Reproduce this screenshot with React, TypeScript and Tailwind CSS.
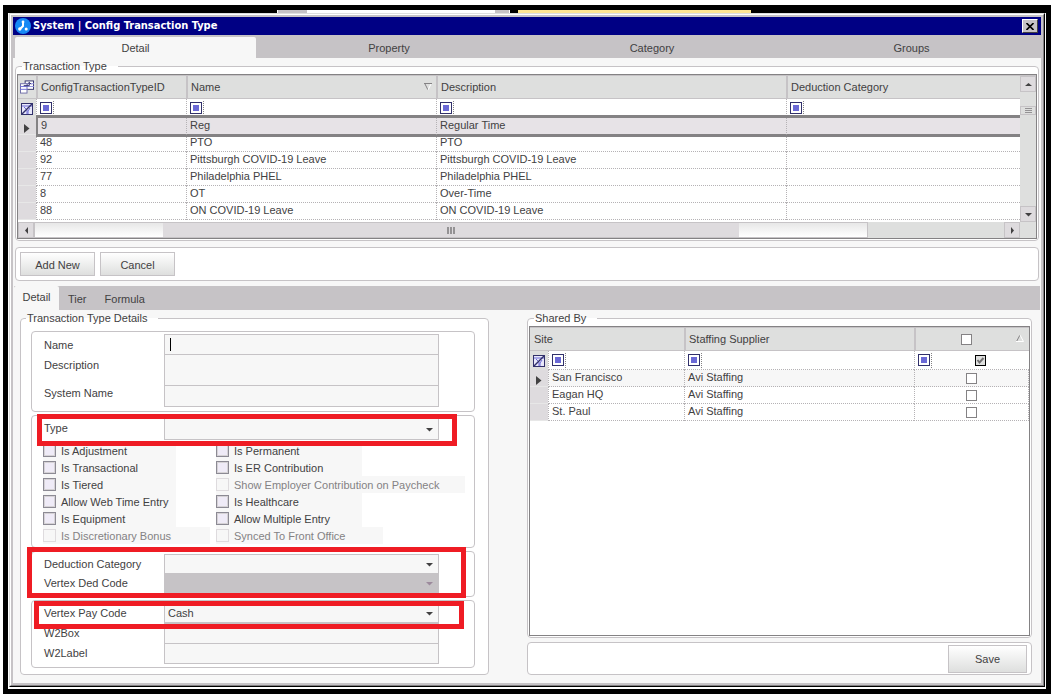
import { useState } from "react";
import type { ReactNode } from "react";

interface ITransactionType {
  id: number;
  name: string;
  description: string;
}

interface ISite {
  site: string;
  supplier: string;
}

interface IFlag {
  label: string;
  disabled?: boolean;
  width: string;
}

const transactionTypes: ITransactionType[] = [
  { id: 9, name: "Reg", description: "Regular Time" },
  { id: 48, name: "PTO", description: "PTO" },
  { id: 92, name: "Pittsburgh COVID-19 Leave", description: "Pittsburgh COVID-19 Leave" },
  { id: 77, name: "Philadelphia PHEL", description: "Philadelphia PHEL" },
  { id: 8, name: "OT", description: "Over-Time" },
  { id: 88, name: "ON COVID-19 Leave", description: "ON COVID-19 Leave" },
];

const sites: ISite[] = [
  { site: "San Francisco", supplier: "Avi Staffing" },
  { site: "Eagan HQ", supplier: "Avi Staffing" },
  { site: "St. Paul", supplier: "Avi Staffing" },
];

const leftFlags: IFlag[] = [
  { label: "Is Adjustment", width: "w-[133px]" },
  { label: "Is Transactional", width: "w-[133px]" },
  { label: "Is Tiered", width: "w-[133px]" },
  { label: "Allow Web Time Entry", width: "w-[133px]" },
  { label: "Is Equipment", width: "w-[133px]" },
  { label: "Is Discretionary Bonus", disabled: true, width: "w-[167px]" },
];

const rightFlags: IFlag[] = [
  { label: "Is Permanent", width: "w-[146px]" },
  { label: "Is ER Contribution", width: "w-[146px]" },
  { label: "Show Employer Contribution on Paycheck", disabled: true, width: "w-[249px]" },
  { label: "Is Healthcare", width: "w-[146px]" },
  { label: "Allow Multiple Entry", width: "w-[146px]" },
  { label: "Synced To Front Office", disabled: true, width: "w-[167px]" },
];

const field = "block w-full border border-[#c6c3c6] bg-[#f7f7f7] px-1 outline-none";

const Logo = () => (
  <svg width="16" height="16" viewBox="0 0 16 16" aria-hidden="true">
    <circle cx="8" cy="8" r="8" fill="#1689f5" />
    <path d="M8 4v4L5 11" stroke="#fff" strokeWidth="2" fill="none" />
    <circle cx="8" cy="4" r="1.4" fill="#fff" />
    <circle cx="4.8" cy="11" r="1.7" fill="#fff" />
    <circle cx="11.2" cy="11" r="1.5" fill="#fff" />
  </svg>
);

const Arrow = ({ dir, color = "#424142" }: { dir: "up" | "down" | "left" | "right"; color?: string }) => {
  const paths = {
    up: "M0 5h7L3.5 2z",
    down: "M0 2h7L3.5 5.500z",
    left: "M5 0v7L2 3.5z",
    right: "M2 0v7L5 3.5z",
  };
  return (
    <svg width="7" height="7" viewBox="0 0 7 7" aria-hidden="true">
      <path d={paths[dir]} fill={color} />
    </svg>
  );
};

const RowPointer = () => (
  <svg className="mx-auto mt-1" width="6" height="9" viewBox="0 0 6 9" aria-hidden="true">
    <path d="M0 0v9l5.5-4.5z" fill="#424142" />
  </svg>
);

const ClearFilterIcon = () => (
  <svg className="mx-auto" width="12" height="12" viewBox="0 0 12 12" aria-hidden="true">
    <rect x=".5" y=".5" width="11" height="11" fill="#e8e8fa" stroke="#31306b" />
    <path d="M1 3h10M3 4l3 3v4M9 5L7 8v3" stroke="#6b69d6" fill="none" />
    <path d="M1 11L11 1" stroke="#31306b" strokeWidth="1.5" />
  </svg>
);

const ColumnsIcon = () => (
  <svg className="mx-auto" width="14" height="14" viewBox="0 0 15 14" aria-hidden="true">
    <rect x="5.5" y=".5" width="9" height="9" fill="#fff" stroke="#31306b" />
    <path d="M5 3.5h10M5 6.5h10" stroke="#8c8ade" />
    <rect x=".5" y="3.5" width="7" height="10" fill="#fff" stroke="#6b69a6" />
    <path d="M0 6.5h8M0 9.5h8" stroke="#6b69d6" />
    <path d="M4 5.5h6V2M8 4l2-2 2 2" stroke="#31306b" fill="none" />
  </svg>
);

const FilterBox = () => (
  <div className="flex h-[15px] w-[17px] items-center border-r border-dotted border-[#848284] pl-[3px]">
    <button type="button" aria-label="Filter" className="grid size-3 place-items-center border border-[#31306b] bg-white">
      <span className="size-[6px] bg-[#6b69d6]" />
    </button>
  </div>
);

const Caption = ({ children }: { children: ReactNode }) => (
  <legend className="ml-[5px] h-[14px] pr-[11px] pl-px leading-[14px]">{children}</legend>
);

const ScrollButton = ({ dir }: { dir: "up" | "down" | "left" | "right" }) => (
  <button
    type="button"
    aria-label={`Scroll ${dir}`}
    className="grid size-4 shrink-0 place-items-center border border-[#c6c3c6] bg-[#dedbde]"
  >
    <Arrow dir={dir} />
  </button>
);

interface IFormRowProps {
  id: string;
  label: string;
  leading?: string;
  children: ReactNode;
}

// The negative margin keeps a tall label from stretching its row
const FormRow = ({ id, label, leading = "leading-5", children }: IFormRowProps) => (
  <div className="grid grid-cols-[132px_275px]">
    <label htmlFor={id} className={`${leading} -mb-2 pl-3`}>{label}</label>
    <div className="relative">{children}</div>
  </div>
);

const Combo = ({ id, options, className, disabled }: { id: string; options: string[]; className: string; disabled?: boolean }) => (
  <>
    <select
      id={id}
      disabled={disabled}
      className={`${className} block w-full appearance-none border border-[#c6c3c6] px-[3px] outline-none ${
        disabled ? "bg-[#c6c3c6]" : "bg-[#f7f7f7]"
      }`}
    >
      {options.map((option) => (
        <option key={option}>{option}</option>
      ))}
    </select>
    <span className="pointer-events-none absolute inset-y-0 right-[6px] flex items-center">
      <Arrow dir="down" color={disabled ? "#9c8a9c" : "#424142"} />
    </span>
  </>
);

const Flags = ({ flags }: { flags: IFlag[] }) => (
  <div className="flex flex-col">
    {flags.map((flag) => (
      <label
        key={flag.label}
        className={`${flag.width} flex h-[17px] items-center gap-[5px] bg-[#f7f7f7] whitespace-nowrap ${
          flag.disabled ? "text-[#848284]" : ""
        }`}
      >
        <input
          type="checkbox"
          disabled={flag.disabled}
          className="size-[13px] shrink-0 appearance-none border border-[#8c8a94] bg-[#efebf7] shadow-[inset_0_0_0_1px_#d6d3d6] checked:bg-[#6b69d6] disabled:border-[#dedbde] disabled:bg-[#f7f7f7] disabled:shadow-none"
        />
        {flag.label}
      </label>
    ))}
  </div>
);

const headCell = "h-[23px] border-b border-l-2 border-[#c6c3c6] bg-[#dedfde] pl-[3px] text-left font-normal";
const filterCell = "h-[19px] border-b border-l border-dotted border-[#b5b2b5]";
const bodyCell = "h-[17px] border-b border-l border-[#b5b2b5] px-[3px] align-top leading-[14px]";
const smallCheck = "block size-[11px] appearance-none border border-[#848284] bg-white checked:bg-[#848284]";
const panel = "rounded-[4px] border border-[#c6c3c6] bg-white";
const pushButton = "border border-[#c6c3c6] bg-linear-to-b from-white to-[#dedfde] pt-px";

const TransactionGrid = () => {
  const [selected, setSelected] = useState<number>(9);

  return (
    <div className="border border-[#848284] bg-white">
      <div className="flex border-t border-[#c6c3c6]">
        <div className="h-[146px] min-w-0 flex-1 overflow-hidden">
          <table className="w-full table-fixed border-separate border-spacing-0">
            <colgroup>
              <col className="w-[18px]" />
              <col className="w-[150px]" />
              <col className="w-[250px]" />
              <col className="w-[350px]" />
              <col />
            </colgroup>
            <thead>
              <tr>
                <th className="h-[23px] border-b border-[#c6c3c6] bg-[#dedfde]"><ColumnsIcon /></th>
                <th className={headCell}>ConfigTransactionTypeID</th>
                <th className={headCell}>
                  <div className="flex items-center justify-between pr-1">
                    Name
                    <svg width="8" height="8" viewBox="0 0 8 8" aria-hidden="true">
                      <path d="M0 .5h8M1 1l3 6" stroke="#848284" fill="none" />
                      <path d="M7 1L4 7" stroke="#fff" />
                    </svg>
                  </div>
                </th>
                <th className={headCell}>Description</th>
                <th className={headCell}>Deduction Category</th>
              </tr>
            </thead>
            <tbody>
              <tr>
                <td className="h-[19px] bg-[#dedfde]"><ClearFilterIcon /></td>
                {[0, 1, 2, 3].map((col) => (
                  <td key={col} className={filterCell}>
                    <FilterBox />
                  </td>
                ))}
              </tr>
              {transactionTypes.map((type) => {
                const active = type.id === selected;
                const tone = active
                  ? "relative z-10 border-b-[#848284] bg-[#e7e3e7] [border-style:dotted] [border-bottom-style:solid] shadow-[0_-3px_0_#848284,0_2px_0_#848284]"
                  : "border-dotted";
                const edge = active ? "border-l-2 border-l-[#848284] [border-left-style:solid]" : "";
                return (
                  <tr key={type.id} onClick={() => setSelected(type.id)}>
                    <td className="h-[17px] border-b border-[#e7e7e7] bg-[#dedbde]">{active && <RowPointer />}</td>
                    <td className={`${bodyCell} ${tone} ${edge}`}>{type.id}</td>
                    <td className={`${bodyCell} ${tone}`}>{type.name}</td>
                    <td className={`${bodyCell} ${tone}`}>{type.description}</td>
                    <td className={`${bodyCell} ${tone}`} />
                  </tr>
                );
              })}
            </tbody>
          </table>
        </div>
        <div className="flex w-4 flex-col bg-[#dedfde]">
          <ScrollButton dir="up" />
          <div className="flex-1 pt-[14px]">
            <div className="flex h-[9px] flex-col items-center justify-evenly border border-[#c6c3c6]">
              <span className="h-px w-[7px] bg-[#949294]" />
              <span className="h-px w-[7px] bg-[#949294]" />
              <span className="h-px w-[7px] bg-[#949294]" />
            </div>
          </div>
          <ScrollButton dir="down" />
        </div>
      </div>
      <div className="flex bg-[#dedfde] pr-4">
        <ScrollButton dir="left" />
        <div className="flex-1">
          <div className="grid h-4 w-[86%] grid-cols-[128fr_578fr_128fr] border border-[#c6c3c6]">
            <span className="bg-linear-to-b from-[#e7e7e7] to-white" />
            <span className="flex items-center justify-center gap-px bg-[#dedbde]">
              <i className="h-[7px] w-[2px] bg-[#949294]" />
              <i className="h-[7px] w-[2px] bg-[#949294]" />
              <i className="h-[7px] w-[2px] bg-[#949294]" />
            </span>
            <span className="bg-linear-to-b from-[#e7e7e7] to-white" />
          </div>
        </div>
        <ScrollButton dir="right" />
      </div>
    </div>
  );
};

const SharedByGrid = () => (
  <div className="flex-1 border border-[#848284] bg-white">
    <table className="w-full table-fixed border-separate border-spacing-0 border-t border-[#c6c3c6]">
      <colgroup>
        <col className="w-[18px]" />
        <col className="w-[136px]" />
        <col />
        <col className="w-[115px]" />
      </colgroup>
      <thead>
        <tr>
          <th colSpan={2} className="h-[23px] border-b border-[#c6c3c6] bg-[#dedfde] pl-1 text-left font-normal">
            Site
          </th>
          <th className={headCell}>Staffing Supplier</th>
          <th className="h-[23px] border-b border-l-2 border-[#c6c3c6] bg-[#dedfde]">
            <div className="flex items-center justify-between pr-[5px] pl-[45px]">
              <input type="checkbox" aria-label="Share with all" className={smallCheck} />
              <svg className="mb-[2px]" width="8" height="8" viewBox="0 0 8 8" aria-hidden="true">
                <path d="M.5 7.500L4 1" stroke="#848284" fill="none" />
                <path d="M4 1l3.500 6.500H0" stroke="#fff" fill="none" />
              </svg>
            </div>
          </th>
        </tr>
      </thead>
      <tbody>
        <tr>
          <td className="h-[19px] bg-[#dedfde]"><ClearFilterIcon /></td>
          <td className={filterCell}><FilterBox /></td>
          <td className={filterCell}><FilterBox /></td>
          <td className={filterCell}>
            <div className="flex items-center">
              <FilterBox />
              <label className="relative ml-[43px]">
                <input
                  type="checkbox"
                  defaultChecked
                  aria-label="Filter shared sites"
                  className="block size-[11px] appearance-none border border-black bg-[#dedfde]"
                />
                <svg className="pointer-events-none absolute inset-0" width="11" height="11" viewBox="0 0 11 11" aria-hidden="true">
                  <path d="M2.500 5l2 2.500L8.500 3" stroke="#737173" strokeWidth="2" fill="none" />
                </svg>
              </label>
            </div>
          </td>
        </tr>
        {sites.map((row, idx) => (
          <tr key={row.site} className={idx === 0 ? "bg-[#f7f7f7]" : "bg-white"}>
            <td className="h-[17px] border-b border-[#e7e7e7] bg-[#dedbde]">{idx === 0 && <RowPointer />}</td>
            <td className={`${bodyCell} border-dotted`}>{row.site}</td>
            <td className={`${bodyCell} border-dotted`}>{row.supplier}</td>
            <td className="h-[17px] border-x border-b border-dotted border-[#b5b2b5] pl-[51px]">
              <input type="checkbox" aria-label={`Share with ${row.site}`} className={smallCheck} />
            </td>
          </tr>
        ))}
      </tbody>
    </table>
  </div>
);

const DetailsForm = () => (
  <fieldset className={`${panel} w-[469px] shrink-0 pt-[6px] pb-[5px]`}>
    <Caption>Transaction Type Details</Caption>
    <div className="ml-[10px] flex w-[444px] flex-col gap-[3px]">
      <div className={`${panel} pt-[2px] pb-1`}>
        <FormRow id="name" label="Name" leading="leading-[22px]">
          <input id="name" type="text" className={`${field} h-5 border-b-0`} />
          <span className="absolute top-1 left-[6px] h-[13px] w-px bg-black" />
        </FormRow>
        <FormRow id="description" label="Description" leading="leading-[22px]">
          <textarea id="description" className={`${field} h-[31px] resize-none border-b-0`} />
        </FormRow>
        <FormRow id="systemName" label="System Name" leading="leading-4">
          <input id="systemName" type="text" className={`${field} h-[22px]`} />
        </FormRow>
      </div>

      <div className={`${panel} relative pt-[2px] pb-[3px]`}>
        <FormRow id="type" label="Type">
          <Combo id="type" options={[""]} className="h-[22px]" />
        </FormRow>
        <div className="grid grid-cols-[173px_1fr] pt-[2px] pl-[11px]">
          <Flags flags={leftFlags} />
          <Flags flags={rightFlags} />
        </div>
        <div className="pointer-events-none absolute top-[-2px] left-[5px] h-8 w-[420px] border-[5px] border-[#ef1c24]" />
      </div>

      <div className={`${panel} relative pt-[2px] pb-[3px]`}>
        <FormRow id="deductionCategory" label="Deduction Category">
          <Combo id="deductionCategory" options={[""]} className="h-5" />
        </FormRow>
        <FormRow id="vertexDedCode" label="Vertex Ded Code" leading="leading-[18px]">
          <Combo id="vertexDedCode" options={[""]} className="h-[19px]" disabled />
        </FormRow>
        <div className="pointer-events-none absolute top-[-5px] left-[-5px] z-10 h-[51px] w-[439px] border-[5px] border-[#ef1c24]" />
      </div>

      <div className={`${panel} relative pt-[2px] pb-[3px]`}>
        <FormRow id="vertexPayCode" label="Vertex Pay Code">
          <Combo id="vertexPayCode" options={["Cash"]} className="h-5" />
        </FormRow>
        <FormRow id="w2Box" label="W2Box">
          <input id="w2Box" type="text" className={`${field} h-5 border-b-0`} />
        </FormRow>
        <FormRow id="w2Label" label="W2Label">
          <input id="w2Label" type="text" className={`${field} h-[21px]`} />
        </FormRow>
        <div className="pointer-events-none absolute top-0 left-[2px] h-7 w-[430px] border-[5px] border-[#ef1c24]" />
      </div>
    </div>
  </fieldset>
);

const ConfigTransactionType = () => (
  <div className="flex flex-1 flex-col bg-[#f7f7f7]">
    <header className="flex h-[18px] items-center bg-[#000084] pr-[3px] pl-[2px] text-white">
      <Logo />
      <h1 className="flex-1 pl-[2px] font-['DejaVu_Sans_Condensed','DejaVu_Sans',sans-serif] text-[11px] font-bold">
        System | Config Transaction Type
      </h1>
      <button
        type="button"
        aria-label="Close"
        className="grid h-[14px] w-4 place-items-center border border-t-white border-r-[#424142] border-b-[#424142] border-l-white bg-[#c6c3c6]"
      >
        <svg width="8" height="7" viewBox="0 0 8 7" aria-hidden="true">
          <path d="M.5 0l7 7M7.500 0l-7 7" stroke="#000" strokeWidth="1.600" />
        </svg>
      </button>
    </header>

    <nav className="grid h-[23px] grid-cols-[243fr_266fr_260fr_259fr] bg-[#c6c3c6]">
      <button type="button" className="mt-[2px] ml-[2px] rounded-t-[2px] bg-[#f7f7f7]">Detail</button>
      <button type="button" className="pt-[2px]">Property</button>
      <button type="button" className="pt-[2px]">Category</button>
      <button type="button" className="pt-[2px]">Groups</button>
    </nav>

    <fieldset className={`${panel} mt-px mr-[2px] ml-[2px] min-w-0 px-px pt-px pb-px`}>
      <Caption>Transaction Type</Caption>
      <TransactionGrid />
    </fieldset>

    <div className={`${panel} mx-[2px] mt-[6px] flex h-[34px] items-center gap-[5px] px-1`}>
      <button type="button" className={`${pushButton} h-6 w-[75px]`}>Add New</button>
      <button type="button" className={`${pushButton} h-6 w-[75px]`}>Cancel</button>
    </div>

    <nav className="mx-px mt-[5px] flex h-6 items-stretch bg-[#c6c3c6]">
      <button type="button" className="w-[45px] rounded-t-[2px] bg-[#f7f7f7] pb-[2px]">Detail</button>
      <button type="button" className="px-[9px] pt-[2px]">Tier</button>
      <button type="button" className="px-[9px] pt-[2px]">Formula</button>
    </nav>

    <main className="flex flex-1 gap-[38px] pt-px pr-[9px] pb-2 pl-[7px]">
      <DetailsForm />
      <div className="flex min-w-0 flex-1 flex-col gap-1">
        <fieldset className={`${panel} flex min-w-0 flex-1 flex-col px-px pt-px pb-px`}>
          <Caption>Shared By</Caption>
          <SharedByGrid />
        </fieldset>
        <div className={`${panel} flex h-[33px] items-center justify-end pr-1`}>
          <button type="button" className={`${pushButton} h-7 w-[79px]`}>Save</button>
        </div>
      </div>
    </main>
  </div>
);

const App = () => (
  <div className="flex min-h-screen flex-col bg-white px-[3px] pt-[5px] pb-[3px] font-['Liberation_Sans',Arial,sans-serif] text-[11px] leading-[14px] text-[#424142]">
    <div className="flex flex-1 flex-col border-[5px] border-black bg-black">
      <div className="flex h-[3px] pl-[269px]">
        <span className="w-[31px] border-x border-white bg-[#c6c3c6]" />
        <span className="w-[187px] bg-white" />
        <span className="w-[15px] border-r border-white bg-[#c6c3c6]" />
        <span className="ml-2 w-[233px] bg-[#ffe794]" />
      </div>
      <div className="flex flex-1 flex-col border-x border-b-2 border-white">
        <div className="flex flex-1 flex-col border border-t-[#dedfde] border-r-black border-b-black border-l-[#dedfde]">
          <div className="flex flex-1 flex-col border border-t-white border-r-[#848284] border-b-[#848284] border-l-white bg-[#c6c3c6] p-[2px]">
            <ConfigTransactionType />
          </div>
        </div>
      </div>
    </div>
  </div>
);

export default App;
